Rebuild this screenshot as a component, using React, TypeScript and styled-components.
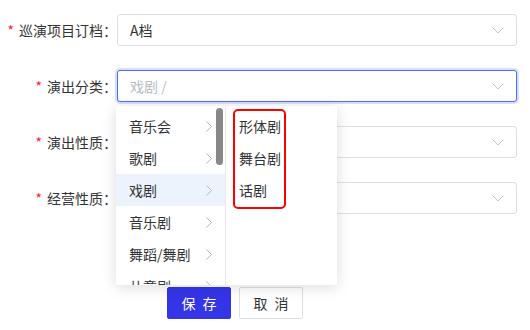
import React from "react";
import styled, { createGlobalStyle } from "styled-components";

const GlobalStyle = createGlobalStyle`
  body {
    margin: 0;
    background: #fff;
    font-family: "Noto Sans CJK SC", "Noto Sans", sans-serif;
    color: #333;
  }
`;

const categories = [
  { name: "音乐会", children: [] as string[] },
  { name: "歌剧", children: [] as string[] },
  { name: "戏剧", children: ["形体剧", "舞台剧", "话剧"] },
  { name: "音乐剧", children: [] as string[] },
  { name: "舞蹈/舞剧", children: [] as string[] },
  { name: "儿童剧", children: [] as string[] },
];

const ChevronDown = () => (
  <svg width="12" height="7" viewBox="0 0 12 7" fill="none">
    <polyline points="0.5,0.5 6,6 11.5,0.5" stroke="#c0c4cc" strokeWidth="1" />
  </svg>
);

const ChevronRight = () => (
  <svg width="6" height="11" viewBox="0 0 6 11" fill="none">
    <polyline points="0.5,0.5 5.5,5.5 0.5,10.5" stroke="#b4b8bf" strokeWidth="1" />
  </svg>
);

const App: React.FC = () => {
  const active = categories[2];

  return (
    <>
      <GlobalStyle />
      <Form>
        <Row>
          <Label>
            <Star>*</Star>巡演项目订档：
          </Label>
          <Select>
            <Value>A档</Value>
            <ChevronDown />
          </Select>
        </Row>

        <Row>
          <Label>
            <Star>*</Star>演出分类：
          </Label>
          <Field>
            <Select focused>
              <Value placeholder>戏剧 /</Value>
              <ChevronDown />
            </Select>
            <Cascader>
              <Column bordered>
                {categories.map((c) => (
                  <Option key={c.name} active={c.name === active.name}>
                    <span>{c.name}</span>
                    <ChevronRight />
                  </Option>
                ))}
                <Thumb />
              </Column>
              <Column>
                {active.children.map((c) => (
                  <Option key={c}>{c}</Option>
                ))}
                <Highlight />
              </Column>
            </Cascader>
          </Field>
        </Row>

        <Row>
          <Label>
            <Star>*</Star>演出性质：
          </Label>
          <Select>
            <Value />
            <ChevronDown />
          </Select>
        </Row>

        <Row>
          <Label>
            <Star>*</Star>经营性质：
          </Label>
          <Select>
            <Value />
            <ChevronDown />
          </Select>
        </Row>

        <Actions>
          <Button primary>保 存</Button>
          <Button>取 消</Button>
        </Actions>
      </Form>
    </>
  );
};

export default App;

const Form = styled.div`
  display: flex;
  flex-direction: column;
  gap: 24px;
  padding: 14px 0 0 0;
`;

const Row = styled.div`
  display: flex;
  align-items: center;
  height: 32px;
`;

const Label = styled.label`
  width: 117px;
  flex-shrink: 0;
  text-align: right;
  font-size: 14px;
  color: #333;
  white-space: nowrap;
`;

const Star = styled.span`
  color: #f5222d;
  margin-right: 5px;
`;

const Field = styled.div`
  position: relative;
`;

const Select = styled.div<{ focused?: boolean }>`
  box-sizing: border-box;
  width: 400px;
  height: 32px;
  display: flex;
  align-items: center;
  justify-content: space-between;
  padding: 0 12px 0 12px;
  border: 1px solid ${({ focused }) => (focused ? "#4f6ef7" : "#dcdfe6")};
  border-radius: 3px;
  box-shadow: ${({ focused }) =>
    focused ? "0 0 0 2px rgba(79, 110, 247, 0.22)" : "none"};
  background: #fff;
`;

const Value = styled.span<{ placeholder?: boolean }>`
  font-size: 14px;
  color: ${({ placeholder }) => (placeholder ? "#b8bcc3" : "#333")};
`;

const Cascader = styled.div`
  position: absolute;
  top: 36px;
  left: -1px;
  z-index: 10;
  display: flex;
  height: 179px;
  background: #fff;
  box-shadow: 0 2px 14px rgba(0, 0, 0, 0.14);
`;

const Column = styled.div<{ bordered?: boolean }>`
  position: relative;
  box-sizing: border-box;
  width: ${({ bordered }) => (bordered ? "110px" : "111px")};
  padding-top: 4px;
  overflow: hidden;
  border-right: ${({ bordered }) => (bordered ? "1px solid #e8eaee" : "none")};
`;

const Option = styled.div<{ active?: boolean }>`
  height: 32px;
  display: flex;
  align-items: center;
  justify-content: space-between;
  padding: 0 13px 0 13px;
  font-size: 14px;
  color: #333;
  white-space: nowrap;
  background: ${({ active }) => (active ? "#edf3fd" : "transparent")};
`;

const Thumb = styled.div`
  position: absolute;
  top: 2px;
  right: 2px;
  width: 7px;
  height: 57px;
  border-radius: 4px;
  background: #888;
`;

const Highlight = styled.div`
  position: absolute;
  top: 3px;
  left: 7px;
  width: 53px;
  height: 100px;
  box-sizing: border-box;
  border: 2px solid #ff0000;
  border-radius: 5px;
`;

const Actions = styled.div`
  display: flex;
  gap: 8px;
  margin-top: 49px;
  padding-left: 167px;
`;

const Button = styled.button<{ primary?: boolean }>`
  box-sizing: border-box;
  width: 64px;
  height: 32px;
  border-radius: 2px;
  font-family: "Noto Sans CJK SC", sans-serif;
  font-size: 14px;
  letter-spacing: 2px;
  padding: 0 0 0 2px;
  border: 1px solid ${({ primary }) => (primary ? "#3535e8" : "#dcdfe6")};
  background: ${({ primary }) => (primary ? "#3535e8" : "#fff")};
  color: ${({ primary }) => (primary ? "#fff" : "#333")};
`;
